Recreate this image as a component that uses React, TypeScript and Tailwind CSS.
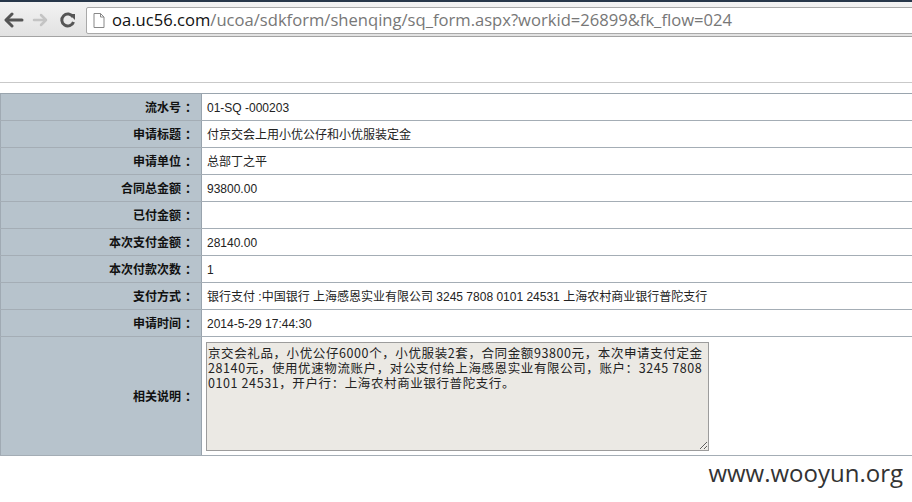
import React from "react";

const rows: [string, string][] = [
  ["流水号", "01-SQ -000203"],
  ["申请标题", "付京交会上用小优公仔和小优服装定金"],
  ["申请单位", "总部丁之平"],
  ["合同总金额", "93800.00"],
  ["已付金额", ""],
  ["本次支付金额", "28140.00"],
  ["本次付款次数", "1"],
  ["支付方式", "银行支付 :中国银行 上海感恩实业有限公司 3245 7808 0101 24531 上海农村商业银行普陀支行"],
  ["申请时间", "2014-5-29 17:44:30"],
];

const font = { fontFamily: '"Liberation Sans", "Noto Sans CJK SC", sans-serif' };

function Label({ text }: { text: string }) {
  return (
    <div className="w-[202px] shrink-0 bg-[#b7c3cc] border-l border-[#a0aab3] border-r border-r-[#98a3ad] flex items-center justify-end pr-[6px] pt-[2px] font-bold text-[#111]">
      <span>{text}</span>
      <span className="inline-block w-[14px] pl-[4px]">：</span>
    </div>
  );
}

export default function App() {
  return (
    <div className="w-[912px] h-[502px] bg-white overflow-hidden relative" style={font}>
      {/* Browser toolbar */}
      <div className="h-[37px] border-b border-[#a3a3a3] bg-gradient-to-b from-[#f4f4f4] to-[#e2e2e2] relative">
        <div className="h-[2px] bg-[#27374a]" />
        <div className="flex items-center h-[35px]">
          <svg width="22" height="16" viewBox="0 0 22 16" className="ml-[3px] mt-[1px]">
            <path d="M9 2 L3 8 L9 14" stroke="#555" strokeWidth="3" fill="none" strokeLinecap="round" strokeLinejoin="round" />
            <path d="M4 8 H19" stroke="#555" strokeWidth="3" strokeLinecap="round" />
          </svg>
          <svg width="18" height="16" viewBox="0 0 18 16" className="ml-[7px] mt-[1px]">
            <path d="M9 3 L14 8 L9 13" stroke="#c4c4c4" strokeWidth="2.5" fill="none" strokeLinecap="round" strokeLinejoin="round" />
            <path d="M2 8 H13" stroke="#c4c4c4" strokeWidth="2.5" strokeLinecap="round" />
          </svg>
          <svg width="18" height="18" viewBox="0 0 18 18" className="ml-[9px] mt-[1px]">
            <path d="M14 6 A6 6 0 1 0 14.5 11" stroke="#555" strokeWidth="3" fill="none" />
            <path d="M10 3 H16 V9 Z" fill="#555" />
          </svg>
          <div className="ml-[9px] flex-1 h-[27px] mt-[1px] bg-white border border-[#a9a9a9] rounded-[2px] flex items-center -mr-[4px]">
            <svg width="12" height="15" viewBox="0 0 12 15" className="ml-[6px]">
              <path d="M1 0.5 H7.5 L11 4 V14.5 H1 Z" fill="#fff" stroke="#888" strokeWidth="1" />
              <path d="M7.5 0.5 V4 H11" fill="none" stroke="#888" strokeWidth="1" />
            </svg>
            <div className="ml-[7px] text-[16.6px] leading-none whitespace-nowrap" style={{ fontFamily: '"Open Sans", sans-serif' }}>
              <span className="text-[#111]">oa.uc56.com</span>
              <span className="text-[#777]">/ucoa/sdkform/shenqing/sq_form.aspx?workid=26899&amp;fk_flow=024</span>
            </div>
          </div>
        </div>
      </div>

      <div className="h-[45px]" />
      <div className="h-px bg-[#c9c9c9]" />
      <div className="h-[10px]" />

      {/* Form table */}
      <div className="border-t border-[#9aa5ae] text-[12px]">
        {rows.map(([label, value], i) => (
          <div key={i} className="flex h-[27px] border-b border-[#a4adb5]">
            <Label text={label} />
            <div className="flex-1 flex items-center pl-[5px] pt-[2px] text-[#222]">{value}</div>
          </div>
        ))}
        <div className="flex h-[119px] border-b border-[#a4adb5]">
          <Label text="相关说明" />
          <div className="flex-1 pl-[4px] pt-[5px]">
            <textarea
              readOnly
              className="block w-[503px] h-[109px] bg-[#ebe9e4] border border-[#9c9c9c] pl-[1px] pt-[2px] text-[12.5px] leading-[15px] tracking-[0.6px] text-[#222] resize-y overflow-hidden outline-none"
              style={{ fontFamily: '"Noto Sans CJK SC", "DejaVu Sans Mono", monospace' }}
              value={"京交会礼品，小优公仔6000个，小优服装2套，合同金额93800元，本次申请支付定金\n28140元，使用优速物流账户，对公支付给上海感恩实业有限公司，账户：3245 7808\n0101 24531，开户行：上海农村商业银行普陀支行。"}
            />
          </div>
        </div>
      </div>

      <div className="flex justify-end pr-[9px] pt-[2px]">
        <span className="text-[24px] text-[#333] leading-[30px]" style={{ fontFamily: '"Open Sans", sans-serif' }}>
          www.wooyun.org
        </span>
      </div>
    </div>
  );
}
